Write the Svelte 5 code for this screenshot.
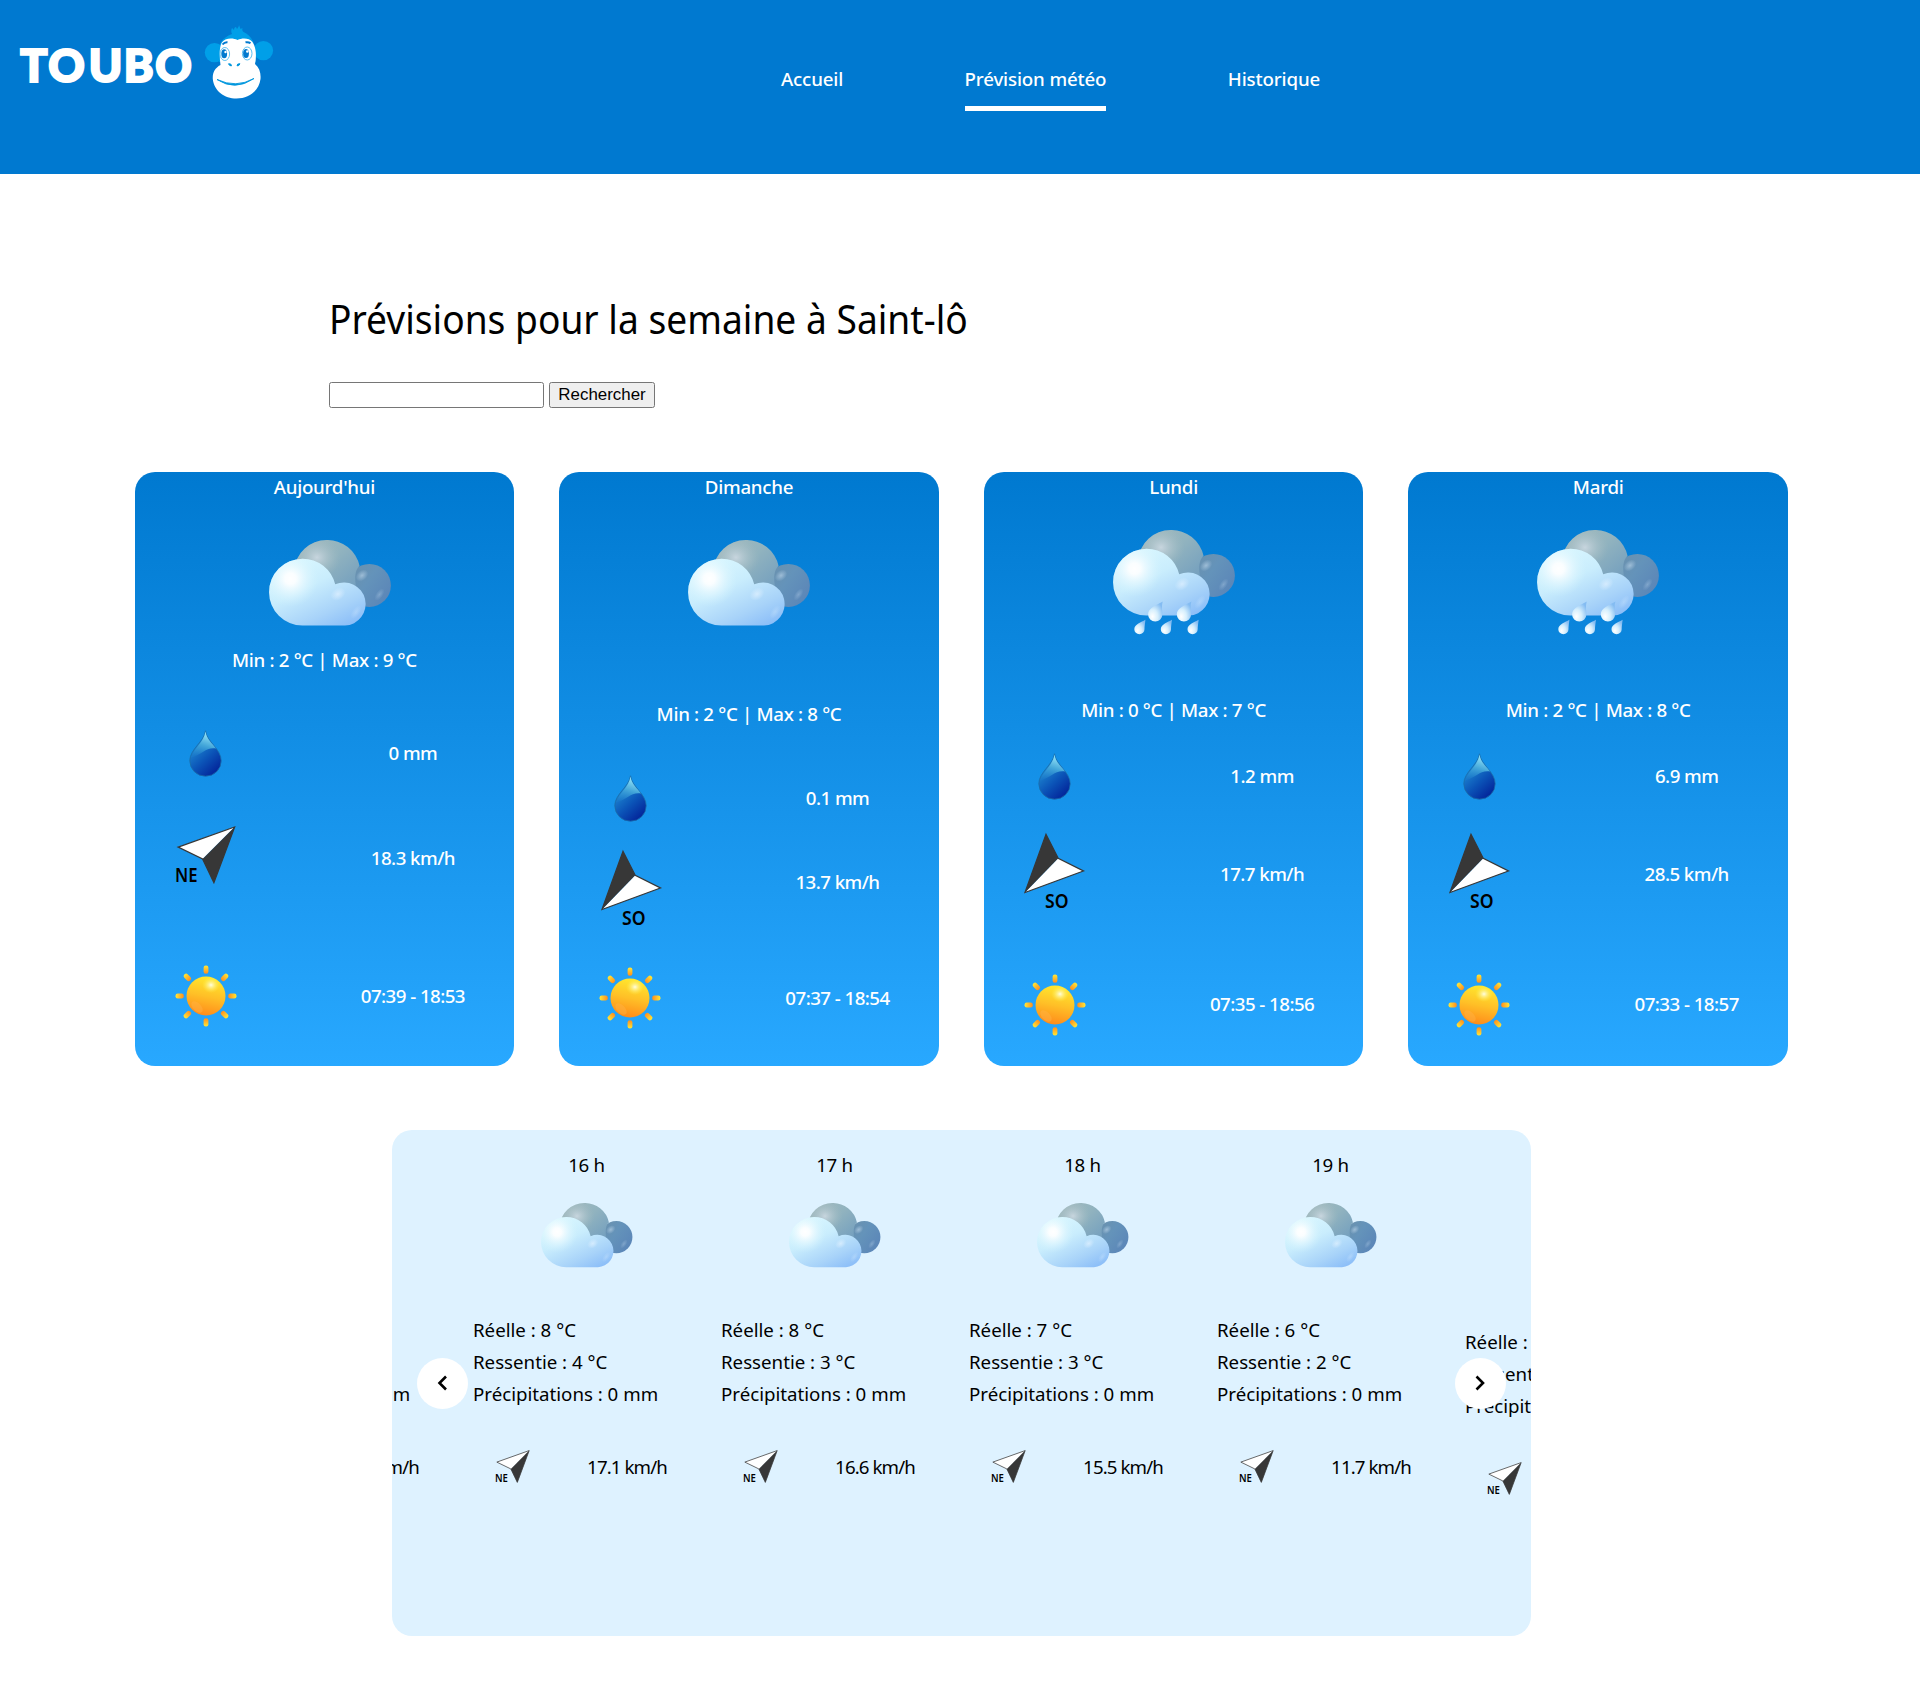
<script>
  const links = [
    { label: 'Accueil' },
    { label: 'Prévision météo', active: true },
    { label: 'Historique' }
  ];

  const days = [
    { name: "Aujourd'hui", kind: 'today', min: 2, max: 9, rain: '0', wind: '18.3', dir: 'NE', sun: '07:39 - 18:53' },
    { name: 'Dimanche', kind: 'dry', min: 2, max: 8, rain: '0.1', wind: '13.7', dir: 'SO', sun: '07:37 - 18:54' },
    { name: 'Lundi', kind: 'wet', min: 0, max: 7, rain: '1.2', wind: '17.7', dir: 'SO', sun: '07:35 - 18:56' },
    { name: 'Mardi', kind: 'wet', min: 2, max: 8, rain: '6.9', wind: '28.5', dir: 'SO', sun: '07:33 - 18:57' }
  ];

  const hours = [
    { h: 15, real: 8, felt: 4, wind: '17.3' },
    { h: 16, real: 8, felt: 4, wind: '17.1' },
    { h: 17, real: 8, felt: 3, wind: '16.6' },
    { h: 18, real: 7, felt: 3, wind: '15.5' },
    { h: 19, real: 6, felt: 2, wind: '11.7' },
    { h: 20, real: 5, felt: 1, wind: '10.4', late: true }
  ];

  const rays = [0, 45, 90, 135, 180, 225, 270, 315];
</script>

<svg class="defs" width="0" height="0" aria-hidden="true">
  <defs>
    <linearGradient id="backBig" x1="0" y1="0" x2="1" y2="1">
      <stop offset="0" stop-color="#a5bbbd" />
      <stop offset=".45" stop-color="#91b3bf" />
      <stop offset="1" stop-color="#6b99be" />
    </linearGradient>
    <radialGradient id="backGlow" cx=".35" cy=".3" r=".36">
      <stop offset="0" stop-color="#cdd9e2" stop-opacity=".9" />
      <stop offset="1" stop-color="#a3bbc0" stop-opacity="0" />
    </radialGradient>
    <linearGradient id="backSmall" x1="0" y1="0" x2="1" y2=".7">
      <stop offset="0" stop-color="#6d91aa" />
      <stop offset=".5" stop-color="#6493ba" />
      <stop offset="1" stop-color="#5b86b8" />
    </linearGradient>
    <linearGradient id="front" x1=".15" y1="0" x2=".85" y2="1">
      <stop offset="0" stop-color="#dcf8ff" />
      <stop offset=".4" stop-color="#c9edfd" />
      <stop offset=".75" stop-color="#a8d3f9" />
      <stop offset="1" stop-color="#8abdf8" />
    </linearGradient>
    <radialGradient id="frontGlow" cx=".32" cy=".3" r=".42">
      <stop offset="0" stop-color="#fff" />
      <stop offset=".2" stop-color="#fff" stop-opacity=".9" />
      <stop offset="1" stop-color="#d4f5ff" stop-opacity="0" />
    </radialGradient>
    <radialGradient id="spot">
      <stop offset="0" stop-color="#dff0ff" stop-opacity=".75" />
      <stop offset="1" stop-color="#dff0ff" stop-opacity="0" />
    </radialGradient>
    <radialGradient id="pearl" cx=".3" cy=".75" r=".8">
      <stop offset="0" stop-color="#fff" />
      <stop offset=".45" stop-color="#d6effd" />
      <stop offset="1" stop-color="#84bcf2" />
    </radialGradient>
    <linearGradient id="water" x1=".25" y1=".3" x2=".7" y2="1">
      <stop offset="0" stop-color="#1c83cf" />
      <stop offset=".5" stop-color="#0b53b7" />
      <stop offset="1" stop-color="#03259a" />
    </linearGradient>
    <linearGradient id="waterShine" x1=".6" y1="0" x2=".3" y2="1">
      <stop offset="0" stop-color="#9deafa" />
      <stop offset=".5" stop-color="#45a8da" />
      <stop offset="1" stop-color="#2a92d5" stop-opacity=".15" />
    </linearGradient>
    <linearGradient id="sunDisc" x1=".6" y1="0" x2=".4" y2="1">
      <stop offset="0" stop-color="#ffe92e" />
      <stop offset=".5" stop-color="#ffc027" />
      <stop offset="1" stop-color="#ff8a1a" />
    </linearGradient>
    <radialGradient id="sunGlow">
      <stop offset="0" stop-color="#fffde0" />
      <stop offset="1" stop-color="#fff04a" stop-opacity="0" />
    </radialGradient>
    <linearGradient id="ray" x1="0" y1="0" x2="0" y2="1">
      <stop offset="0" stop-color="#ffe936" />
      <stop offset="1" stop-color="#ff8d1e" />
    </linearGradient>
  </defs>
</svg>

{#snippet cloudShape()}
  <circle cx="100.4" cy="45.4" r="21.5" fill="url(#backSmall)" />
  <ellipse cx="93" cy="35.5" rx="7" ry="5" transform="rotate(-40 93 35.5)" fill="url(#spot)" opacity=".6" />
  <ellipse cx="110.5" cy="54.5" rx="7" ry="3.5" transform="rotate(-55 110.5 54.5)" fill="url(#spot)" opacity=".35" />
  <path d="M57.6 0a33 33 0 0 1 33 26c-4 3-5 10-4 18l3 14H40L25 30A33 33 0 0 1 57.6 0Z" fill="url(#backBig)" />
  <path d="M57.6 0a33 33 0 0 1 33 26c-4 3-5 10-4 18l3 14H40L25 30A33 33 0 0 1 57.6 0Z" fill="url(#backGlow)" />
  <path d="M33.5 18.7a33.4 33.4 0 0 1 32.7 25.6A21.6 21.6 0 1 1 76 85.6H33.5a33.4 33.4 0 0 1 0-66.9Z" fill="url(#front)" />
  <circle cx="33.5" cy="52.1" r="33.4" fill="url(#frontGlow)" />
  <ellipse cx="69" cy="54" rx="8" ry="6" transform="rotate(-35 69 54)" fill="url(#spot)" />
  <ellipse cx="87" cy="72" rx="8" ry="4" transform="rotate(-55 87 72)" fill="url(#spot)" opacity=".4" />
{/snippet}

{#snippet arrow(dir)}
  {#if dir === 'NE'}
    <svg class="arrow" viewBox="0 0 61 58" role="img" aria-label="Vent nord-est">
      <path d="M59.6 1 3.2 21.1 27.6 33Z" fill="#fff" />
      <path d="M59.6 1 27.6 33 38.9 56.5Z" fill="#373737" />
      <path d="M59.6 1 3.2 21.1 27.6 33 38.9 56.5Z" fill="none" stroke="#373737" stroke-width="1.3" />
      <text x="0" y="55.6" textLength="22.5" lengthAdjust="spacingAndGlyphs">NE</text>
    </svg>
  {:else}
    <svg class="arrow so" viewBox="0 0 61 76" role="img" aria-label="Vent sud-ouest">
      <path d="M1 59.5 34.2 25.3 59.4 38Z" fill="#fff" />
      <path d="M1 59.5 22 1.5 34.2 25.3Z" fill="#373737" />
      <path d="M1 59.5 22 1.5 34.2 25.3 59.4 38Z" fill="none" stroke="#373737" stroke-width="1.3" />
      <text x="21" y="74.5" textLength="23.5" lengthAdjust="spacingAndGlyphs">SO</text>
    </svg>
  {/if}
{/snippet}

<header>
  <svg class="logo" width="280" height="104" viewBox="0 0 280 104" role="img" aria-label="Toubo">
    <text class="brand" x="20.3 48.2 88.7 123.8 155.3" y="82.2">TOUBO</text>
    <g fill="#009fe8">
      <circle cx="214.5" cy="52.6" r="9.7" />
      <circle cx="263.4" cy="50.6" r="9.7" />
      <path d="M219 62c-2-14 0-23 13-28-1-2-1-4 0-6l2 2c0-2 1-3 2-3l1 2c1-1 2-3 2-4l1.500 4 2-1c-.5 2 0 3 1 4 9 4 13 13 12.500 30Z" />
    </g>
    <path d="M220.500 65c-1-8-1.500-16 1-22 3-5 11-5.500 16-3 5-2.500 12-2 15 2 4 6 4 15 2.500 22 4.500 4 6 9 5.500 15-1.500 12-12 19.500-24 19.500S214 91 212.800 79c-.4-6 2-11 7.700-14Z" fill="#fff" />
    <path d="M222.500 44.500q2-2.500 5-2.200M245.500 42.300q3-.6 5 1" fill="none" stroke="#0079cf" stroke-width="2" />
    <g fill="#fff" stroke="#4bb9ee" stroke-width=".9">
      <ellipse cx="224.8" cy="54" rx="4.8" ry="6.5" />
      <ellipse cx="247.2" cy="53.5" rx="4.8" ry="6.5" />
    </g>
    <ellipse cx="224.2" cy="53.8" rx="2.9" ry="4.5" fill="#0079cf" />
    <ellipse cx="246" cy="53.5" rx="2.9" ry="4.5" fill="#0079cf" />
    <circle cx="225.5" cy="52" r="1.2" fill="#fff" />
    <circle cx="247.3" cy="51.5" r="1.2" fill="#fff" />
    <path d="M228.500 63.800q3-.5 3 2-2 .5-3-2ZM240 63.800q-3-.5-3 2 2 .5 3-2Z" fill="#0096dd" stroke="#0096dd" />
    <path d="M217 79.500q18 12 37-1-18 10-37 1Z" fill="#0096dd" stroke="#0096dd" stroke-width=".9" />
  </svg>
  <nav>
    {#each links as link}
      <a href="#top" class:active={link.active}>{link.label}</a>
    {/each}
  </nav>
</header>

<main>
  <section class="intro">
    <h1>Prévisions pour la semaine à Saint-lô</h1>
    <form>
      <input type="text" aria-label="Ville" />
      <button type="button">Rechercher</button>
    </form>
  </section>

  <section class="days">
    {#each days as day}
      <article class="day {day.kind}">
        <h2>{day.name}</h2>
        {#if day.kind === 'wet'}
          <svg class="sky" width="122" height="105" viewBox="0 0 122 105" aria-hidden="true">
            {@render cloudShape()}
            {#each [42.3, 71] as x}
              <path transform="translate({x} 84.6)" d="M7.4-13C2-9.5-7.2-7-7.2 0A7.1 6.9 0 0 0 7.1 0C7.1-4 6-8 7.4-13Z" fill="url(#pearl)" />
            {/each}
            {#each [26.5, 53, 79.7] as x}
              <path transform="translate({x} 99.3)" d="M5.9-9.5C2-7-5.2-5-5.2 0A5.1 5 0 0 0 5 0C5-3 5.6-6 5.9-9.5Z" fill="url(#pearl)" />
            {/each}
          </svg>
        {:else}
          <svg class="sky" width="122" height="86" viewBox="0 0 122 86" aria-hidden="true">{@render cloudShape()}</svg>
        {/if}
        <p class="temps">Min : {day.min} °C | Max : {day.max} °C</p>
        <div class="row rain">
          <svg width="33" height="47" viewBox="0 0 33 47" aria-hidden="true">
            <path d="M16.5 .8C18 12 32.2 19 32.2 30.8A15.7 15.4 0 0 1 .8 30.8C.8 19 15 12 16.5 .8Z" fill="url(#water)" stroke="#1c6da8" stroke-width=".8" />
            <path d="M16.5 1.5C17.5 9 23 13 27 18.5 17 17 14 24 2.2 27.5 4.500 18.5 15 12 16.5 1.5Z" fill="url(#waterShine)" />
          </svg>
          <span>{day.rain} mm</span>
        </div>
        <div class="row wind">
          {@render arrow(day.dir)}
          <span>{day.wind} km/h</span>
        </div>
        <div class="row sun">
          <svg width="62" height="62" viewBox="-31 -31 62 62" aria-hidden="true">
            {#each rays as angle}
              <rect x="-2.4" y="-30.5" width="4.8" height="8.3" rx="2.2" fill="url(#ray)" transform="rotate({angle})" />
            {/each}
            <circle r="19.5" fill="url(#sunDisc)" />
            <ellipse cx="5" cy="-11" rx="9" ry="8" fill="url(#sunGlow)" />
            <ellipse cx="-9" cy="11" rx="7" ry="4" transform="rotate(45 -9 11)" fill="#ffb347" opacity=".45" />
          </svg>
          <span>{day.sun}</span>
        </div>
      </article>
    {/each}
  </section>

  <section class="hours">
    <div class="track">
      {#each hours as hour}
        <article class="hour" class:late={hour.late}>
          <h3>{hour.h} h</h3>
          <svg class="sky" width="91.5" height="64.5" viewBox="0 0 122 86" aria-hidden="true">{@render cloudShape()}</svg>
          <ul>
            <li>Réelle : {hour.real} °C</li>
            <li>Ressentie : {hour.felt} °C</li>
            <li>Précipitations : 0 mm</li>
          </ul>
          <div class="breeze">
            {@render arrow('NE')}
            <span>{hour.wind} km/h</span>
          </div>
        </article>
      {/each}
    </div>
    <button type="button" class="slide prev" aria-label="Précédent">
      <svg width="12" height="18" viewBox="0 0 12 18"><path d="M9 2.5 2.5 9 9 15.5" /></svg>
    </button>
    <button type="button" class="slide next" aria-label="Suivant">
      <svg width="12" height="18" viewBox="0 0 12 18"><path d="M2.5 2.5 9 9 2.5 15.5" /></svg>
    </button>
  </section>
</main>

<style>
  :global(body) {
    margin: 0;
    background: #fff;
    color: #000;
    font-family: 'Noto Sans', 'Open Sans', sans-serif;
    font-size: 18.7px;
  }

  .defs {
    position: absolute;
  }

  svg {
    display: block;
  }

  h1,
  h2,
  h3,
  p,
  ul {
    margin: 0;
    padding: 0;
    font-size: inherit;
    font-weight: inherit;
    list-style: none;
  }

  header {
    display: flex;
    height: 174px;
    background: #0079d0;
  }

  .logo {
    flex: none;
  }

  .brand {
    fill: #fff;
    font-family: Lato, sans-serif;
    font-size: 45px;
    font-weight: 900;
    stroke: #fff;
    stroke-width: 2.2;
  }

  nav {
    display: flex;
    align-items: flex-start;
    gap: 121.5px;
    margin-left: 501px;
    padding-top: 64px;
  }

  nav a {
    height: 42px;
    color: #fff;
    font-weight: 500;
    letter-spacing: -0.15px;
    line-height: 29px;
    text-decoration: none;
    border-bottom: 5px solid transparent;
  }

  nav a.active {
    border-color: #fff;
  }

  .intro {
    padding: 117px 0 0 329px;
  }

  h1 {
    width: max-content;
    font-size: 40px;
    line-height: 56px;
    white-space: nowrap;
    transform: scaleX(0.929);
    transform-origin: left;
  }

  form {
    display: flex;
    gap: 5px;
    margin-top: 35px;
  }

  form input {
    box-sizing: border-box;
    width: 215px;
    height: 26px;
    padding: 0 3px;
    border: 1px solid #767676;
    border-radius: 2.5px;
  }

  form button {
    box-sizing: border-box;
    width: 106px;
    height: 26px;
    padding: 0;
    border: 1px solid #767676;
    border-radius: 2.5px;
    background: #efefef;
    color: #000;
    font: 16.9px 'Liberation Sans', Arial, sans-serif;
  }

  .days {
    display: grid;
    grid-template-columns: repeat(4, 379.6px);
    gap: 45px;
    margin: 64px 0 0 134.6px;
  }

  .day {
    height: 594px;
    border-radius: 20px;
    background: linear-gradient(#0079d0, #28a8ff);
    color: #fff;
    font-weight: 500;
  }

  .today {
    --sky: 36px;
    --temps: 20px;
    --rain: 53px;
    --wind: 44.5px;
    --sun: 71.8px;
  }

  .dry {
    --sky: 36px;
    --temps: 73.5px;
    --rain: 44.5px;
    --wind: 23.5px;
    --sun: 49.8px;
  }

  .wet {
    --sky: 25.5px;
    --temps: 61.5px;
    --rain: 26px;
    --wind: 38px;
    --sun: 63.5px;
  }

  .day h2 {
    height: 32px;
    letter-spacing: -0.25px;
    line-height: 30px;
    text-align: center;
  }

  .day .sky {
    margin: var(--sky) auto 0;
  }

  .today .sky {
    margin-left: 134.8px;
  }

  .temps {
    margin-top: var(--temps);
    height: 30px;
    letter-spacing: -0.33px;
    line-height: 28px;
    text-align: center;
  }

  .row {
    display: grid;
    grid-template-rows: 100%;
    grid-template-columns: 142px 1fr;
    column-gap: 35px;
    align-items: center;
    justify-items: center;
  }

  .row span {
    padding-bottom: 2.6px;
    letter-spacing: -0.55px;
  }

  .rain {
    margin-top: var(--rain);
    height: 50px;
  }

  .rain svg {
    margin-bottom: 2px;
  }

  .wind {
    margin-top: var(--wind);
    height: 70px;
  }

  .sun {
    margin-top: var(--sun);
    height: 62px;
  }

  .arrow {
    width: 61px;
    overflow: visible;
  }

  .arrow text {
    fill: #000;
    font-size: 19px;
    font-weight: 600;
  }

  .today .arrow {
    margin-bottom: 7px;
  }

  .dry .arrow {
    margin: 10px 0 0 3px;
  }

  .wet .arrow {
    margin-bottom: 9px;
  }

  .hours {
    position: relative;
    width: 1139px;
    height: 506px;
    margin: 64px 0 0 392px;
    overflow: hidden;
    border-radius: 20px;
    background: #def2ff;
  }

  .track {
    display: flex;
    gap: 21px;
    margin-left: -167px;
  }

  .hour {
    flex: 0 0 227px;
    padding-top: 19px;
  }

  .late {
    padding-top: 31px;
  }

  h3 {
    letter-spacing: -0.3px;
    line-height: 32px;
    text-align: center;
  }

  .hour .sky {
    margin: 22px auto 0;
    padding-left: 1px;
  }

  ul {
    margin-top: 46px;
    line-height: 32.4px;
    white-space: nowrap;
  }

  .breeze {
    display: grid;
    grid-template-rows: 100%;
    grid-template-columns: 61px 1fr;
    align-items: center;
    justify-items: center;
    margin-top: 40px;
    height: 32px;
    padding: 0 2px 0 22px;
  }

  .breeze span {
    letter-spacing: -0.9px;
  }

  .breeze .arrow {
    width: 35px;
    justify-self: start;
  }

  .slide {
    position: absolute;
    top: 227.5px;
    display: grid;
    place-items: center;
    width: 51px;
    height: 51px;
    padding: 0;
    border: 0;
    border-radius: 50%;
    background: #fff;
  }

  .slide path {
    fill: none;
    stroke: #000;
    stroke-width: 2.6;
  }

  .prev {
    left: 25px;
  }

  .next {
    right: 25.5px;
  }
</style>
